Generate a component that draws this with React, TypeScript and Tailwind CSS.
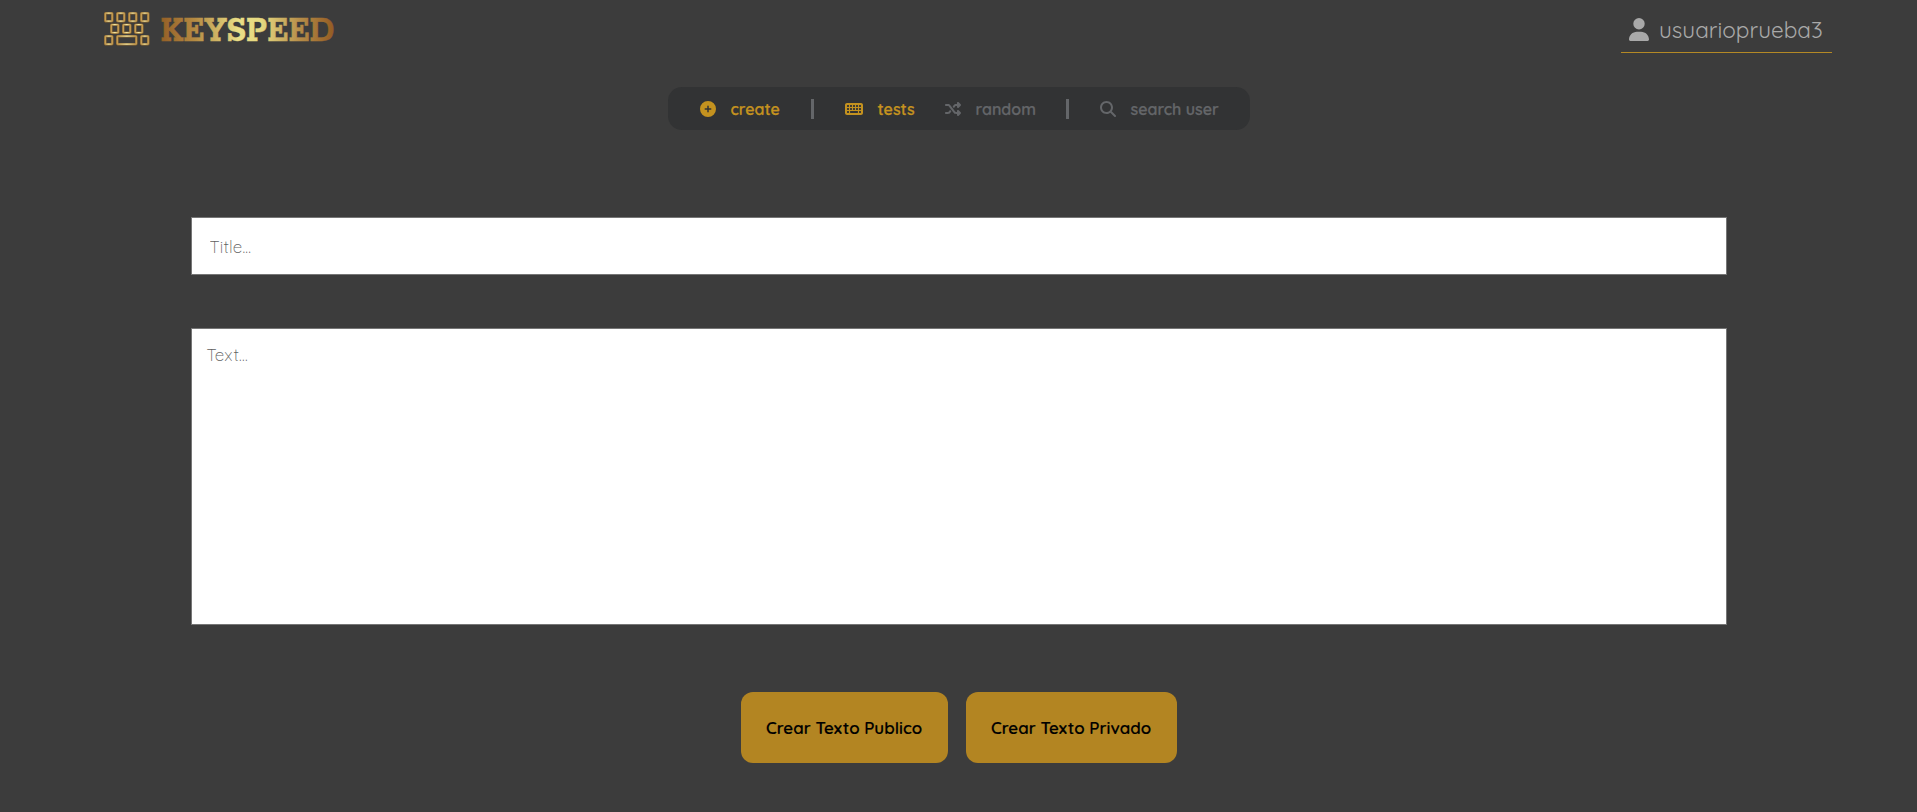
import React from "react";
import { FaCirclePlus, FaKeyboard, FaMagnifyingGlass, FaShuffle, FaUser } from "react-icons/fa6";

const keys = [
  [0, 0, 7], [12, 0, 7], [24, 0, 7], [36, 0, 7],
  [6, 11.5, 7], [18, 11.5, 7], [30, 11.5, 7],
  [0, 23, 7], [12, 23, 19], [36, 23, 7],
];

function Logo() {
  return (
    <svg className="h-[53px] w-[240px]" viewBox="0 -10 240 53" aria-label="Keyspeed">
      <defs>
        <linearGradient id="word" x1="0" x2="1">
          <stop offset="0" stopColor="#935e26" />
          <stop offset="0.2" stopColor="#b58b43" />
          <stop offset="0.45" stopColor="#eadf87" />
          <stop offset="0.58" stopColor="#e6d980" />
          <stop offset="0.8" stopColor="#b68d49" />
          <stop offset="1" stopColor="#935b22" />
        </linearGradient>
        <linearGradient id="key" x1="0" x2="1">
          <stop offset="0" stopColor="#c39a50" />
          <stop offset="0.5" stopColor="#f5eca8" />
          <stop offset="1" stopColor="#c39a50" />
        </linearGradient>
      </defs>
      {keys.map(([x, y, w]) => (
        <g key={`${x}-${y}`} fill="none">
          <rect x={x + 2.3} y={y + 3.2} width={w} height="8" rx="0.5" stroke="#8c6831" strokeWidth="2.6" />
          <rect x={x + 2.3} y={y + 3.2} width={w} height="8" rx="0.5" stroke="url(#key)" strokeWidth="1.3" />
        </g>
      ))}
      <text
        x="57.5"
        y="31"
        textLength="174"
        lengthAdjust="spacingAndGlyphs"
        fill="url(#word)"
        stroke="url(#word)"
        strokeWidth="0.4"
        className="font-['Rokkitt','Arvo','Zilla_Slab','Roboto_Slab','DejaVu_Serif',serif] text-[39px] leading-none font-bold"
      >
        KEYSPEED
      </text>
    </svg>
  );
}

export default function App() {
  return (
    <div className="flex h-[812px] w-full flex-col bg-[#3c3c3c] font-['Quicksand','Lato',sans-serif]">
      <header className="flex h-[53px] items-start justify-between pl-[103px] pr-[85px]">
        <Logo />
        <a className="flex h-[53px] w-[211px] items-center border-b border-[#b48925] pl-[8px] pt-[7px] text-[#a9a9a9]">
          <FaUser className="h-[23px] w-[20px] shrink-0" />
          <span className="ml-[10px] whitespace-nowrap text-[22.5px] leading-[30px]">usuarioprueba3</span>
        </a>
      </header>

      <nav className="mx-auto mt-[34px] flex h-[43px] w-[582px] items-center rounded-[14px] bg-[#323334] text-[16px] font-semibold leading-5 text-[#646669] [-webkit-text-stroke:0.25px]">
        <span className="ml-[32px] flex w-[111px] items-center text-[#c4921f]">
          <FaCirclePlus className="size-4" />
          <span className="ml-[15px]">create</span>
        </span>
        <i className="h-5 w-[3px] bg-[#646669]" />
        <span className="ml-[31px] flex w-[100px] items-center text-[#c4921f]">
          <FaKeyboard className="h-4 w-[18px]" />
          <span className="ml-[15px]">tests</span>
        </span>
        <span className="flex w-[121px] items-center">
          <FaShuffle className="size-4" />
          <span className="ml-[15px]">random</span>
        </span>
        <i className="h-5 w-[3px] bg-[#646669]" />
        <span className="ml-[31px] flex items-center whitespace-nowrap">
          <FaMagnifyingGlass className="size-4" />
          <span className="ml-[15px]">search user</span>
        </span>
      </nav>

      <main className="flex flex-col items-center pt-[87px]">
        <input
          aria-label="Title"
          placeholder="Title..."
          className="h-[58px] w-[1536px] border border-[#767676] bg-white px-[18px] text-[17px] font-light tracking-[0.2px] outline-none placeholder:text-[#606060]"
        />
        <textarea
          aria-label="Text"
          placeholder="Text..."
          className="mt-[53px] h-[297px] w-[1536px] resize-none border border-[#767676] bg-white px-[15px] py-[15px] text-[17px] font-light leading-[22px] tracking-[0.2px] outline-none placeholder:text-[#606060]"
        />
        <div className="mt-[67px] flex gap-[18px] text-[16.9px] font-semibold text-black [-webkit-text-stroke:0.15px]">
          <button className="h-[71px] w-[207px] whitespace-nowrap rounded-[12px] bg-[#b38522]">Crear Texto Publico</button>
          <button className="h-[71px] w-[211px] whitespace-nowrap rounded-[12px] bg-[#b38522]">Crear Texto Privado</button>
        </div>
      </main>
    </div>
  );
}
